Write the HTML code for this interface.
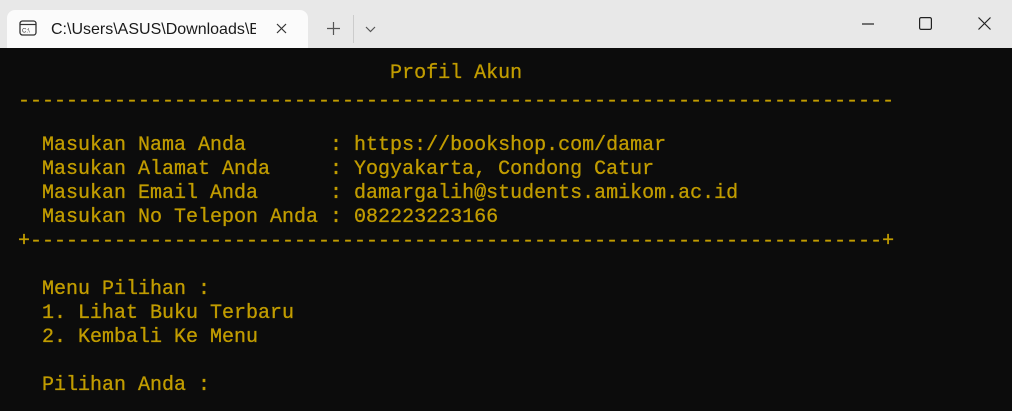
<!DOCTYPE html>
<html><head><style>
html,body{margin:0;padding:0;width:1012px;height:411px;overflow:hidden;background:#0c0c0c}
.bar{position:absolute;left:0;top:0;width:1012px;height:48px;background:#e8e8e8}
.tab{position:absolute;left:7px;top:10px;width:301px;height:38px;background:#fbfbfb;border-radius:8px 8px 0 0}
.tt{position:absolute;left:51px;top:21px;font:16px "Liberation Sans",sans-serif;color:#1a1a1a;width:205px;overflow:hidden;white-space:nowrap}
.term{position:absolute;left:18px;top:62px;font:20px/24px "Liberation Mono",monospace;color:#c19c00;white-space:pre;letter-spacing:0;-webkit-text-stroke:0.3px #c19c00}
</style></head><body>
<div class="bar"></div>
<div class="tab"></div>
<svg style="position:absolute;left:19px;top:20px" width="18" height="16" viewBox="0 0 18 16"><rect x="1" y="1" width="16" height="14" rx="2.5" fill="none" stroke="#333" stroke-width="1.3"/><line x1="1" y1="4.5" x2="17" y2="4.5" stroke="#333" stroke-width="1.2"/><text x="3" y="12.5" font-size="6" font-family="Liberation Sans" fill="#333">C:\</text></svg>
<div class="tt">C:\Users\ASUS\Downloads\BMKG</div>
<svg style="position:absolute;left:276px;top:23px" width="11" height="11"><path d="M1 1L10 10M10 1L1 10" stroke="#333" stroke-width="1.2"/></svg>
<svg style="position:absolute;left:327px;top:22px" width="13" height="13"><path d="M6.5 0V13M0 6.5H13" stroke="#555" stroke-width="1.2"/></svg>
<div style="position:absolute;left:353px;top:15px;width:1px;height:28px;background:#ccc"></div>
<svg style="position:absolute;left:365px;top:26px" width="11" height="7"><path d="M1 1L5.5 5.5L10 1" stroke="#555" stroke-width="1.2" fill="none"/></svg>
<svg style="position:absolute;left:862px;top:23px" width="12" height="2"><path d="M0 1H12" stroke="#222" stroke-width="1.2"/></svg>
<svg style="position:absolute;left:919px;top:17px" width="13" height="13"><rect x="0.6" y="0.6" width="11.8" height="11.8" rx="1.5" fill="none" stroke="#222" stroke-width="1.2"/></svg>
<svg style="position:absolute;left:978px;top:17px" width="13" height="13"><path d="M0.5 0.5L12.5 12.5M12.5 0.5L0.5 12.5" stroke="#222" stroke-width="1.2"/></svg>
<div class="term">                               Profil Akun
<span style="position:relative;top:4px">-------------------------------------------------------------------------</span>

  Masukan Nama Anda       : https://bookshop.com/damar
  Masukan Alamat Anda     : Yogyakarta, Condong Catur
  Masukan Email Anda      : damargalih@students.amikom.ac.id
  Masukan No Telepon Anda : 082223223166
+-----------------------------------------------------------------------+

  Menu Pilihan :
  1. Lihat Buku Terbaru
  2. Kembali Ke Menu

  Pilihan Anda :</div>
</body></html>
